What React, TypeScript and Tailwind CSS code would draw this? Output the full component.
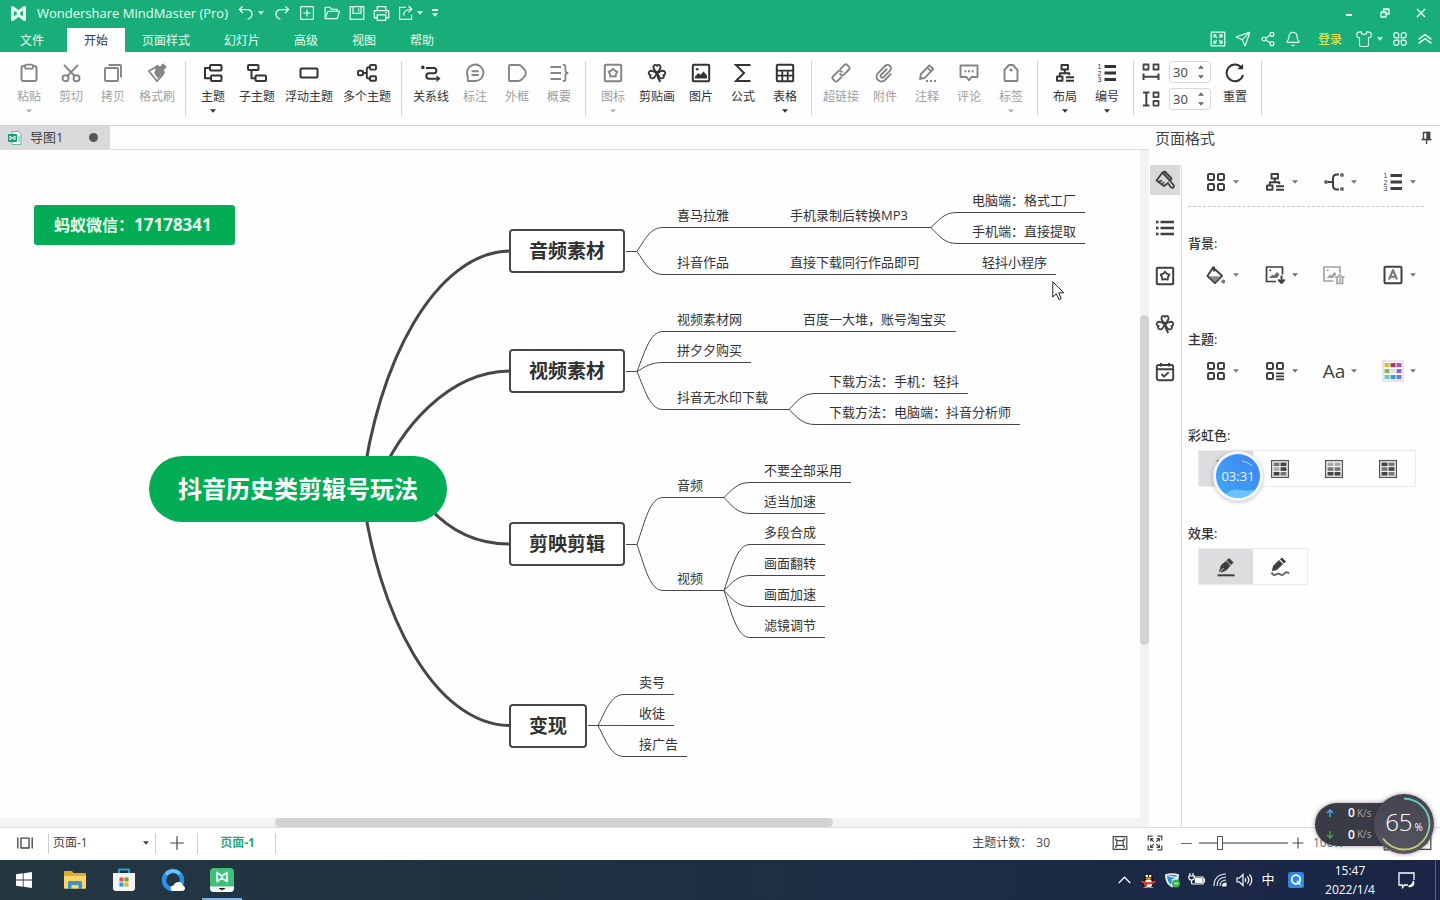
import type { ReactNode } from "react";
import { Bell, Send, Share2, Shirt } from "lucide-react";

/* ------------------------------------------------------------------ icons */

type IconProps = { children: ReactNode; size?: number; sw?: number };

function Icon({ children, size = 20, sw = 2 }: IconProps) {
  return (
    <svg
      width={size}
      height={size}
      viewBox="0 0 20 20"
      fill="none"
      stroke="currentColor"
      strokeWidth={sw}
      strokeLinejoin="round"
      aria-hidden="true"
      className="shrink-0"
    >
      {children}
    </svg>
  );
}

function Caret({ className = "" }: { className?: string }) {
  return (
    <svg width="6" height="4" viewBox="0 0 6 4" fill="currentColor" aria-hidden="true" className={`shrink-0 ${className}`}>
      <path d="M0 .3h6L3 3.7z" />
    </svg>
  );
}

const PasteIcon = () => (
  <Icon>
    <rect x="2.5" y="3" width="15" height="15" rx="2" />
    <rect x="6" y="1.6" width="8" height="4" rx="1.2" fill="#fff" strokeWidth="1.8" />
  </Icon>
);
const CutIcon = () => (
  <Icon sw={1.9}>
    <circle cx="4.5" cy="15.3" r="3" />
    <circle cx="15.5" cy="15.3" r="3" />
    <path d="M3 1.8 13.6 13M17 1.8 6.4 13" />
  </Icon>
);
const CopyIcon = () => (
  <Icon sw={1.9}>
    <rect x="2" y="5" width="13" height="13" rx="1" />
    <path d="M5.5 2H17a1 1 0 0 1 1 1v11.5" />
  </Icon>
);
const BrushIcon = () => (
  <Icon sw={1.8}>
    <path d="M1.8 8 9 4l7 7.5-6 6.7z" />
    <path d="m8.5 4.2 2.3-1.4 6.2 6.4-1.4 2.4z" fill="currentColor" />
    <path d="m12.8 5.4 3.2-3.9 2.6 2.3-3.6 4z" fill="currentColor" />
    <path d="m9 5.500-1.500 5 3.500 4.500 3.500-3.500z" fill="currentColor" strokeWidth=".5" />
  </Icon>
);
const TopicIcon = () => (
  <Icon>
    <rect x="7" y="2" width="11.5" height="5.5" rx="1" />
    <rect x="8" y="12.5" width="10.5" height="5.5" rx="1" />
    <path d="M7 5H2v10.3h6" />
  </Icon>
);
const SubtopicIcon = () => (
  <Icon>
    <rect x="1" y="2" width="10.5" height="5" rx="1" />
    <rect x="8.5" y="12.5" width="10.5" height="5.5" rx="1" />
    <path d="M4.5 7v8.3h4" />
  </Icon>
);
const FloatingIcon = () => (
  <Icon>
    <rect x="1.5" y="5.5" width="17" height="9" rx="1" />
  </Icon>
);
const MultiTopicIcon = () => (
  <Icon sw={1.9}>
    <rect x="1" y="7.8" width="5" height="4.4" rx="1" />
    <rect x="13" y="2" width="6" height="4.6" rx="1" />
    <rect x="13" y="13.2" width="6" height="4.6" rx="1" />
    <path d="M6 10h3.8M13 4.3h-1.2q-2 0-2 2v7.2q0 2 2 2H13" />
  </Icon>
);
const RelationIcon = () => (
  <Icon>
    <circle cx="1.8" cy="4.4" r="1.8" fill="currentColor" stroke="none" />
    <path d="M5 5h8.2a2.7 2.7 0 0 1 0 5.3H8a2.7 2.7 0 0 0 0 5.4h7.6" />
    <path d="m15.5 12.3 4 3.3-4 3.4z" fill="currentColor" stroke="none" />
  </Icon>
);
const CalloutIcon = () => (
  <Icon sw={1.9}>
    <path d="M2.8 18v-4.6A8.2 8.2 0 1 1 10.4 18z" />
    <path d="M6.6 8.3h7.2M6.6 12h7.2" />
  </Icon>
);
const BoundaryIcon = () => (
  <Icon sw={1.9}>
    <path d="M3 2h8.4q1.6 0 2.7.9L18 7.2q1.6 2.8 0 5.6l-3.9 4.3q-1.1.9-2.7.9H3q-1 0-1-1V3q0-1 1-1z" />
  </Icon>
);
const SummaryIcon = () => (
  <Icon sw={1.9}>
    <path d="M1.5 4H12M1.5 10H12M1.5 16H12" />
    <path d="M13.8 2h1q1.6 0 1.6 1.6v4q0 2.2 2.3 2.4-2.3.2-2.3 2.4v4q0 1.6-1.6 1.6h-1" strokeWidth="1.8" />
  </Icon>
);
const BadgeIcon = () => (
  <Icon sw={2}>
    <rect x="1.8" y="1.8" width="16.4" height="16.4" rx="1" />
    <path d="m10 5.6 1.7 2.1 2.7 1-1.4 2.3-.3 2.7-2.7-.6-2.7.6-.3-2.7-1.4-2.3 2.7-1z" strokeWidth="1.8" />
  </Icon>
);
const CloverIcon = () => (
  <Icon sw={1.8}>
    <path d="M10 9.6C7.5 7.5 5.8 5.5 6.6 3.3 7.3 1.4 9.3 1.3 10 2.9c.7-1.6 2.7-1.5 3.4.4.8 2.2-.9 4.2-3.4 6.3z" />
    <path d="M9.6 10.2c-.9 3-2.4 5.4-4.7 5.1-1.9-.3-2.4-2-1.2-3.2-1.9-.1-2.6-1.9-1.5-3.4 1.4-1.7 4.5-.7 7.4 1.5z" />
    <path d="M10.4 10.2c.9 3 2.4 5.4 4.7 5.1 1.9-.3 2.4-2 1.2-3.2 1.9-.1 2.6-1.9 1.5-3.4-1.4-1.7-4.5-.7-7.4 1.5z" />
    <path d="M10 10q.3 5 3.3 8.8" strokeWidth="2" />
  </Icon>
);
const PictureIcon = () => (
  <Icon sw={2}>
    <rect x="1.8" y="1.8" width="16.4" height="16.4" rx="1" />
    <path d="M4 15.500v-2l3.500-3.500 2 1.800 3-3.300 3.500 4v3z" fill="currentColor" stroke="none" />
    <circle cx="6.2" cy="6.2" r="1.3" fill="currentColor" stroke="none" />
  </Icon>
);
const SigmaIcon = () => (
  <Icon sw={2}>
    <path d="M17.5 2H3l8 8-8 8h14.5" strokeLinejoin="miter" />
  </Icon>
);
const TableIcon = () => (
  <Icon sw={2}>
    <rect x="1.8" y="1.8" width="16.4" height="16.4" rx="1" />
    <path d="M2 7.6h16M2 12.7h16M7.3 7.6V18M12.7 7.6V18" strokeWidth="1.8" />
  </Icon>
);
const LinkIcon = () => (
  <Icon sw={1.9}>
    <g transform="rotate(-45 10 10)">
      <path d="M8 13.2H1.8a1.800 1.800 0 0 1-1.800-1.800V8.600a1.800 1.800 0 0 1 1.800-1.800H9.500a1.800 1.800 0 0 1 1.800 1.800v2" />
      <path d="M12 6.800h6.200a1.800 1.800 0 0 1 1.800 1.800v2.800a1.800 1.800 0 0 1-1.800 1.800H10.500a1.800 1.800 0 0 1-1.800-1.800v-2" />
    </g>
  </Icon>
);
const ClipIcon = () => (
  <Icon sw={1.9}>
    <g transform="rotate(-45 10 10)">
      <path d="M14.500 8.500H6a1.700 1.700 0 0 0 0 3.400h9a3.400 3.400 0 0 0 0-6.800H5a4.900 4.900 0 0 0 0 9.800h9" />
    </g>
  </Icon>
);
const NoteIcon = () => (
  <Icon sw={1.9}>
    <path d="m3 16 1-5L12.3 2.3l4 3.7L8 14.7z" />
    <path d="m10.3 4.6 3.8 3.7" />
    <path d="M9 18h2M13 18h2M17 18h2" />
  </Icon>
);
const CommentIcon = () => (
  <Icon sw={1.9}>
    <path d="M1.5 2.5h17V14h-6L10 17.3 7.5 14h-6z" />
    <path d="M5.5 8.2h2M9 8.2h2M12.5 8.2h2" />
  </Icon>
);
const TagIcon = () => (
  <Icon sw={1.9}>
    <path d="M3.500 17.200V7L8 2h4l4.500 5v10.200q0 .8-.8.8H4.300q-.8 0-.8-.8z" />
    <circle cx="10" cy="7" r="1.6" fill="currentColor" stroke="none" />
  </Icon>
);
const LayoutIcon = () => (
  <Icon sw={1.9}>
    <rect x="6.5" y="2" width="6.5" height="4.5" />
    <rect x="2" y="13.5" width="5.5" height="4.3" />
    <path d="M9.8 6.500V10M4.800 13.500V10.200h9.500v2M11 14.300h8M11 17.800h8" />
  </Icon>
);
const NumberingIcon = () => (
  <Icon sw={2.8}>
    <path d="M7.5 3.500H19M7.500 10H19M7.500 16.500H19" />
    <g fill="currentColor" stroke="none" fontSize="7" fontFamily="Liberation Sans, sans-serif">
      <text x="0.5" y="6">1</text>
      <text x="0.5" y="12.5">2</text>
      <text x="0.5" y="19">3</text>
    </g>
  </Icon>
);
const HSpaceIcon = () => (
  <Icon sw={1.8}>
    <rect x="2.5" y="2.5" width="5" height="5" />
    <rect x="12.5" y="2.5" width="5" height="5" />
    <path d="M2.500 11.500v6.500M17.500 11.500v6.500M2.500 14.800h15" strokeWidth="2" />
  </Icon>
);
const VSpaceIcon = () => (
  <Icon sw={1.8}>
    <rect x="12.5" y="3.5" width="5" height="4.6" />
    <rect x="12.5" y="12" width="5" height="4.6" />
    <path d="M2 3.500h6.500M2 16.500h6.500M5.300 3.500v13" strokeWidth="2" />
  </Icon>
);
const ResetIcon = () => (
  <Icon sw={2}>
    <path d="M16.500 4.800A8.300 8.300 0 1 0 18 12" />
    <path d="M12.300 6.300h5.800V1z" fill="currentColor" stroke="none" />
  </Icon>
);

const squarePath = "M3 2h3.500q1.500 0 1.500 1.500V7q0 1-1 1H3.500Q2 8 2 6.500V3q0-1 1-1z";
const FourIcon = () => (
  <Icon sw={2}>
    <path d={squarePath} />
    <path d={squarePath} transform="translate(20 0) scale(-1 1)" />
    <path d={squarePath} transform="translate(0 20) scale(1 -1)" />
    <path d={squarePath} transform="translate(20 20) scale(-1 -1)" />
  </Icon>
);
const ThreeListIcon = () => (
  <Icon sw={2}>
    <path d={squarePath} />
    <path d={squarePath} transform="translate(20 0) scale(-1 1)" />
    <path d={squarePath} transform="translate(0 20) scale(1 -1)" />
    <path d="M11 12.300h8M11 15.300h8M11 18.300h8" strokeWidth="1.7" />
  </Icon>
);
const BranchIcon = () => (
  <Icon sw={2}>
    <path d="M3 10h6M15 2.500h-2q-4 0-4 4v7q0 4 4 4h2" />
    <g fill="#6b6b6b" stroke="none">
      <circle cx="2" cy="10" r="2" />
      <circle cx="18" cy="3" r="2" />
      <circle cx="18" cy="17" r="2" />
    </g>
  </Icon>
);
const PaintbrushIcon = () => (
  <Icon sw={1.9}>
    <path d="M1.500 10.500 7.500 2.500 9.800 1.500l6.700 7-2 3.500-5.500 4z" />
    <path d="m7.800 3 7.500 7.800" />
    <path d="m4 11.500 3-1M6.500 14l3-2" strokeWidth="1.4" />
    <path d="m13 13 3 4.300q1.300 1 2.300 0t0-2.500L15 11" fill="#fff" />
  </Icon>
);
const ListIcon = () => (
  <Icon sw={2.6}>
    <path d="M5.500 4H19M5.500 10H19M5.500 16H19M1 4h2.600M1 10h2.600M1 16h2.600" />
  </Icon>
);
const CalendarIcon = () => (
  <Icon sw={1.9}>
    <rect x="1.8" y="3" width="16.4" height="15.2" rx="2" />
    <path d="M2 7.200h16M6 1v3.500M14 1v3.500M6.500 12l2.600 2.600 4.600-4.400" />
  </Icon>
);
const BucketIcon = () => (
  <Icon sw={1.9}>
    <path d="m7 2.500 9 8.300-7 7.200-7.500-7z" />
    <path d="M3.500 11.300h11.300L9 17z" fill="#8a8a8a" stroke="none" />
    <path d="M8 1.500v5" />
    <circle cx="17.3" cy="16.5" r="1.9" fill="#777" stroke="none" />
  </Icon>
);
const PictureDownIcon = () => (
  <Icon sw={1.7}>
    <path d="M11 16.500H1.500V2h16v7.500" />
    <path d="m4 13 3.500-3.500 1.500 1L12 7l2.500 2.500-2.500 3.500z" fill="#6b6b6b" stroke="none" />
    <circle cx="5.2" cy="5.3" r="1" fill="currentColor" stroke="none" />
    <path d="M16.500 10.500v7M13.300 14.500l3.200 3.500 3.200-3.500" strokeWidth="2" />
  </Icon>
);
const PictureTrashIcon = () => (
  <svg width="22" height="20" viewBox="0 0 22 20" fill="none" stroke="currentColor" strokeWidth="1.7" aria-hidden="true" className="shrink-0">
    <path d="M10.500 16H1V2h16v6" />
    <path d="M3.500 13 7 9.500l1.500 1L11.500 7l2 2-3.500 4z" fill="currentColor" stroke="none" />
    <circle cx="4.8" cy="5.3" r="1" fill="currentColor" stroke="none" />
    <path d="M12 12h9.500M14 12v6.500h5.500V12M16.800 13.500v4M15 10h3.500" />
  </svg>
);
const WatermarkIcon = () => (
  <Icon sw={2}>
    <rect x="1.5" y="1.8" width="17" height="16.4" rx="1" />
    <path d="m6 14.500 4-9.500 4 9.500M7.300 11.700h5.400" stroke="#777" />
  </Icon>
);
const PaletteIcon = () => {
  const colors = ["#d0c13c", "#b4365c", "#a857a8", "#7fb84f", "#dedede", "#8a6cc4", "#6fc9ba", "#2f9fc6", "#7b78c4"];
  return (
    <svg width="22" height="22" viewBox="0 0 22 22" aria-hidden="true" className="shrink-0">
      <rect x="1" y="1" width="20" height="20" fill="#fff" stroke="#cfcde0" />
      {colors.map((c, i) => (
        <rect key={c} x={2.5 + (i % 3) * 6} y={3 + Math.floor(i / 3) * 6} width="5" height="4.2" fill={c} />
      ))}
    </svg>
  );
};
function RainbowIcon({ shades }: { shades: string[] }) {
  return (
    <svg width="20" height="20" viewBox="0 0 20 20" aria-hidden="true">
      <rect x="1.6" y="1.6" width="16.8" height="16.8" fill="#fff" stroke="#555" strokeWidth="1.3" />
      {shades.map((c, i) => (
        <rect key={i} x={3.5 + (i % 2) * 7} y={3.5 + Math.floor(i / 2) * 4.7} width="6" height="3.7" fill={c} />
      ))}
    </svg>
  );
}
const PenLineIcon = () => (
  <Icon sw={1}>
    <path d="m3.500 14.500 2-6.500 4.500-3.500 4 4-3.500 4.300-5 2.200z" fill="currentColor" />
    <path d="m11 3.500 2-2 4 4-2 2z" fill="currentColor" />
    <path d="m3.500 15.500 4-4.500" stroke="#dddcde" />
    <path d="M1.500 18.300h17" strokeWidth="2" />
  </Icon>
);
const PenWaveIcon = () => (
  <Icon sw={1}>
    <path d="M2.500 13.500 3.500 9l5.500-5.500L12.500 7 7 12.500z" fill="currentColor" />
    <path d="m10.500 2 1.500-1 3.500 3.500-1.500 1.500z" fill="currentColor" />
    <path d="M1.500 15.500q2 3.500 4.500 2t4.500 0 4-1 4.500 0" strokeWidth="2" stroke="#666" />
  </Icon>
);

/* ----------------------------------------------------------------- header */

const UndoIcon = () => (
  <Icon size={16} sw={1.6}>
    <path d="M6 1.500 1.800 5.700 6 10M2 5.700h9q6.500 0 6.500 6 0 5-5.500 6" />
  </Icon>
);
const RedoIcon = () => (
  <Icon size={16} sw={1.6}>
    <path d="m14 1.500 4.200 4.200L14 10M18 5.700H9q-6.500 0-6.500 6 0 5 5.500 6" />
  </Icon>
);
const NewIcon = () => (
  <Icon size={16} sw={1.5}>
    <rect x="2" y="2" width="16" height="16" rx="1" />
    <path d="M10 5.500v9M5.500 10h9" />
  </Icon>
);
const OpenIcon = () => (
  <Icon size={16} sw={1.5}>
    <path d="M1.500 17V3h6l2 2.500h7V8M1.500 17 5 8h14.500l-3 9z" />
  </Icon>
);
const SaveIcon = () => (
  <Icon size={16} sw={1.5}>
    <path d="M1.500 2h17v16h-17zM5 2v8.500h10V2M12 4.500V8" />
  </Icon>
);
const PrintIcon = () => (
  <Icon size={17} sw={1.5}>
    <path d="M5 6.500V2h10v4.500M5 15H1.500V6.500h17V15H15M5 11.500h10V18H5zM14.500 9h2" />
  </Icon>
);
const ExportIcon = () => (
  <Icon size={16} sw={1.5}>
    <path d="M10 3H2v15h15v-6M7 13q0-7 9-8M13 1.500 17.500 5 13 9" />
  </Icon>
);
const ExpandIcon = () => (
  <Icon size={16} sw={1.6}>
    <rect x="1.5" y="1.5" width="17" height="17" />
    <path d="M5 8V5h3M12 5h3v3M15 12v3h-3M8 15H5v-3M5 5l3.500 3.500M15 5l-3.500 3.500M15 15l-3.500-3.500M5 15l3.500-3.500" />
  </Icon>
);
const AppsIcon = () => (
  <Icon size={16} sw={1.5}>
    <path d="M8.500 8.500H5A3.200 3.200 0 1 1 8.500 5zM11.500 8.500V5A3.200 3.200 0 1 1 15 8.500zM8.500 11.500V15A3.200 3.200 0 1 1 5 11.500zM11.500 11.500H15a3.200 3.200 0 1 1-3.500 3.500z" />
  </Icon>
);

const titleBtn = "flex h-6 w-[25px] items-center justify-center";

const tabs = ["页面样式", "幻灯片", "高级", "视图", "帮助"];

function Header() {
  return (
    <header className="shrink-0 bg-[#19ae79] text-[#e3fff4]">
      <div className="flex h-7 items-center pb-0.5">
        <svg width="17" height="15" viewBox="0 0 17 15" aria-hidden="true" className="ml-[10px] mr-[10px] shrink-0">
          <path d="M2.500 13.500v-12l6 4.500 6-4.500v12l-6-4.500z" fill="none" stroke="currentColor" strokeWidth="3" strokeLinejoin="round" />
          <path d="M6.500 7.500 8.500 6l2 1.500-2 1.500z" fill="currentColor" />
        </svg>
        <h1 className="w-[197px] shrink-0 whitespace-nowrap text-[13px] leading-6">Wondershare MindMaster (Pro)</h1>
        <button aria-label="撤销" className="flex h-6 w-[35px] items-center gap-1 pl-1"><UndoIcon /><Caret /></button>
        <button aria-label="重做" className={titleBtn}><RedoIcon /></button>
        <button aria-label="新建" className={titleBtn}><NewIcon /></button>
        <button aria-label="打开" className={titleBtn}><OpenIcon /></button>
        <button aria-label="保存" className={titleBtn}><SaveIcon /></button>
        <button aria-label="打印" className={titleBtn}><PrintIcon /></button>
        <button aria-label="导出" className="flex h-6 w-[35px] items-center gap-[3px] pl-1"><ExportIcon /><Caret /></button>
        <button aria-label="更多" className="flex h-6 w-3 flex-col items-center justify-center gap-0.5">
          <span className="h-0.5 w-[6px] bg-current" /><Caret />
        </button>
        <div className="ml-auto flex pr-px">
          <button aria-label="最小化" className="flex h-6 w-9 items-center justify-center">
            <span className="mt-1 h-0.5 w-1.5 bg-white" />
          </button>
          <button aria-label="还原" className="flex h-6 w-9 items-center justify-center">
            <Icon size={10} sw={2.6}><path d="M2 8h10v10H2zM7 8V2h11v10h-6" /><path d="M2 9h10M7 3h11" /></Icon>
          </button>
          <button aria-label="关闭" className="flex h-6 w-9 items-center justify-center">
            <Icon size={10} sw={3}><path d="m2 2 16 16M18 2 2 18" /></Icon>
          </button>
        </div>
      </div>
      <nav className="flex h-6 text-xs leading-[22px]">
        <button className="mr-[3px] px-5 pt-0.5">文件</button>
        <button className="bg-white px-[17px] pt-0.5 text-[#333]">开始</button>
        {tabs.map((t) => (
          <button key={t} className="px-[17px] pt-0.5">{t}</button>
        ))}
        <div className="ml-auto flex items-center pb-0.5 pr-[3px]">
          <button aria-label="全屏" className={titleBtn}><ExpandIcon /></button>
          <button aria-label="发送" className={titleBtn}><Send size={16} strokeWidth={1.7} /></button>
          <button aria-label="分享" className={titleBtn}><Share2 size={16} strokeWidth={1.7} /></button>
          <button aria-label="通知" className={titleBtn}><Bell size={16} strokeWidth={1.7} /></button>
          <button className="w-[50px] pt-0.5 font-medium text-[#dfe05a]">登录</button>
          <button aria-label="皮肤" className="flex w-8 items-center gap-1"><Shirt size={18} strokeWidth={1.5} /><Caret /></button>
          <button aria-label="应用" className={titleBtn}><AppsIcon /></button>
          <button aria-label="收起" className={titleBtn}>
            <Icon size={16} sw={1.8}><path d="m2 10.500 8-6 8 6M2 15.500l8-6 8 6" /></Icon>
          </button>
        </div>
      </nav>
    </header>
  );
}

/* ----------------------------------------------------------------- ribbon */

type Tool = { label: string; icon: ReactNode; off?: boolean; menu?: boolean };

const groups: Tool[][] = [
  [
    { label: "粘贴", icon: <PasteIcon />, off: true, menu: true },
    { label: "剪切", icon: <CutIcon />, off: true },
    { label: "拷贝", icon: <CopyIcon />, off: true },
    { label: "格式刷", icon: <BrushIcon />, off: true },
  ],
  [
    { label: "主题", icon: <TopicIcon />, menu: true },
    { label: "子主题", icon: <SubtopicIcon /> },
    { label: "浮动主题", icon: <FloatingIcon /> },
    { label: "多个主题", icon: <MultiTopicIcon /> },
  ],
  [
    { label: "关系线", icon: <RelationIcon /> },
    { label: "标注", icon: <CalloutIcon />, off: true },
    { label: "外框", icon: <BoundaryIcon />, off: true },
    { label: "概要", icon: <SummaryIcon />, off: true },
  ],
  [
    { label: "图标", icon: <BadgeIcon />, off: true, menu: true },
    { label: "剪贴画", icon: <CloverIcon /> },
    { label: "图片", icon: <PictureIcon /> },
    { label: "公式", icon: <SigmaIcon /> },
    { label: "表格", icon: <TableIcon />, menu: true },
  ],
  [
    { label: "超链接", icon: <LinkIcon />, off: true },
    { label: "附件", icon: <ClipIcon />, off: true },
    { label: "注释", icon: <NoteIcon />, off: true },
    { label: "评论", icon: <CommentIcon />, off: true },
    { label: "标签", icon: <TagIcon />, off: true, menu: true },
  ],
  [
    { label: "布局", icon: <LayoutIcon />, menu: true },
    { label: "编号", icon: <NumberingIcon />, menu: true },
  ],
];

const toolWidths: Record<number, string> = { 2: "w-[42px]", 3: "w-[46px]", 4: "w-[58px]" };

function ToolButton({ label, icon, off, menu }: Tool) {
  return (
    <button
      disabled={off}
      className={`flex flex-col items-center pt-[11px] ${toolWidths[label.length]} ${off ? "text-[#858585]" : "text-[#333]"}`}
    >
      {icon}
      <span className={`mt-[5px] whitespace-nowrap text-xs leading-[18px] ${off ? "text-[#a0a0a0]" : ""}`}>{label}</span>
      {menu && <Caret className={off ? "mt-[3px] text-[#b4b4b4]" : "mt-[3px]"} />}
    </button>
  );
}

const Divider = () => <span className="ml-[5px] mr-1.5 mt-[9px] h-[55px] w-px shrink-0 bg-[#d6d6d6]" />;

function SpacingField({ id, label, icon }: { id: string; label: string; icon: ReactNode }) {
  return (
    <div className="flex items-center gap-2">
      <label htmlFor={id} aria-label={label}>{icon}</label>
      <div className="flex h-[22px] w-[42px] rounded-[3px] border border-[#d9d9dc]">
        <input id={id} defaultValue="30" className="w-7 bg-transparent pl-[3px] text-[13px] leading-5 text-[#444] outline-none" />
        <div className="flex flex-col justify-between py-[3px] text-[#6b6b6b]">
          <button aria-label={`增加${label}`}><Caret className="block rotate-180" /></button>
          <button aria-label={`减少${label}`}><Caret className="block" /></button>
        </div>
      </div>
    </div>
  );
}

function Ribbon() {
  return (
    <div className="flex h-[74px] shrink-0 border-b border-[#cfcfd1] pl-2">
      {groups.map((g) => (
        <div key={g[0].label} className="flex">
          {g.map((t) => <ToolButton key={t.label} {...t} />)}
          <Divider />
        </div>
      ))}
      <div className="ml-px mr-[3px] flex flex-col gap-[5px] pt-[9px] text-[#444]">
        <SpacingField id="gap-x" label="水平间距" icon={<HSpaceIcon />} />
        <SpacingField id="gap-y" label="垂直间距" icon={<VSpaceIcon />} />
      </div>
      <ToolButton label="重置" icon={<ResetIcon />} />
      <Divider />
    </div>
  );
}

/* --------------------------------------------------------------- mind map */

type Leaf = { text: string; x: number; y: number };

/* y is the height of the line on which the topic stands */
const leaves: Leaf[] = [
  { text: "喜马拉雅", x: 677, y: 77 },
  { text: "手机录制后转换MP3", x: 790, y: 77 },
  { text: "电脑端：格式工厂", x: 972, y: 62 },
  { text: "手机端：直接提取", x: 972, y: 93 },
  { text: "抖音作品", x: 677, y: 124 },
  { text: "直接下载同行作品即可", x: 790, y: 124 },
  { text: "轻抖小程序", x: 982, y: 124 },
  { text: "视频素材网", x: 677, y: 181 },
  { text: "百度一大堆，账号淘宝买", x: 803, y: 181 },
  { text: "拼夕夕购买", x: 677, y: 212 },
  { text: "抖音无水印下载", x: 677, y: 259 },
  { text: "下载方法：手机：轻抖", x: 829, y: 243 },
  { text: "下载方法：电脑端：抖音分析师", x: 829, y: 274 },
  { text: "音频", x: 677, y: 347 },
  { text: "不要全部采用", x: 764, y: 332 },
  { text: "适当加速", x: 764, y: 363 },
  { text: "视频", x: 677, y: 440 },
  { text: "多段合成", x: 764, y: 394 },
  { text: "画面翻转", x: 764, y: 425 },
  { text: "画面加速", x: 764, y: 456 },
  { text: "滤镜调节", x: 764, y: 487 },
  { text: "卖号", x: 639, y: 544 },
  { text: "收徒", x: 639, y: 575 },
  { text: "接广告", x: 639, y: 606 },
];

const mainTopics: Leaf[] = [
  { text: "音频素材", x: 509, y: 79 },
  { text: "视频素材", x: 509, y: 199 },
  { text: "剪映剪辑", x: 509, y: 372 },
  { text: "变现", x: 509, y: 554 },
];

/* [start x, start y, end y, end of the line] */
const branches: [number, number, number, number][] = [
  [637, 101, 77, 931],
  [637, 101, 124, 1056],
  [931, 77, 62, 1085],
  [931, 77, 93, 1085],
  [637, 221, 181, 956],
  [637, 221, 212, 751],
  [637, 221, 259, 789],
  [789, 259, 243, 968],
  [789, 259, 274, 1020],
  [637, 394, 347, 724],
  [637, 394, 440, 724],
  [724, 347, 332, 851],
  [724, 347, 363, 825],
  [724, 440, 394, 825],
  [724, 440, 425, 825],
  [724, 440, 456, 825],
  [724, 440, 487, 825],
  [598, 575, 544, 674],
  [598, 575, 575, 674],
  [598, 575, 606, 687],
];

function branchPath([x, y, y2, end]: [number, number, number, number]) {
  const dy = y2 - y;
  return `M${x} ${y + 0.5}C${x + 8} ${y + 0.5 + dy * 0.5} ${x + 13} ${y2 + 0.5} ${x + 26} ${y2 + 0.5}H${end}`;
}

function MindMap() {
  return (
    <main className="relative min-h-0 min-w-0 flex-1 overflow-hidden bg-[#fefefe]">
      <svg width="1140" height="668" className="absolute left-0 top-0" fill="none" aria-hidden="true">
        <g stroke="#474747" strokeWidth="3">
          <path d="M362 339C377 213 435 103 509 101" />
          <path d="M375 339C400 275 450 222 509 221" />
          <path d="M425 353C445 377 472 394 509 394" />
          <path d="M362 339C377 465 435 574 509 575.5" />
        </g>
        <g stroke="#474747" strokeWidth="1">
          <path d="M626 101.500h11M626 221.500h11M626 394.500h11M588 575.500h10" />
          {branches.map((b) => (
            <path key={b.join()} d={branchPath(b)} />
          ))}
        </g>
      </svg>
      <div className="absolute left-[34px] top-[55px] min-w-[201px] rounded-[3px] bg-[#03ad55] px-5 text-base font-bold leading-10 text-[#eafff3]">
        蚂蚁微信：<span className="text-[17px]">17178341</span>
      </div>
      <div className="absolute left-[149px] top-[306px] rounded-full bg-[#03ad55] px-[29px] text-2xl font-bold leading-[66px] text-white">
        抖音历史类剪辑号玩法
      </div>
      {mainTopics.map((t) => (
        <div
          key={t.text}
          className="absolute whitespace-nowrap rounded-[4px] border-2 border-[#474747] bg-white px-[18px] text-[19px] font-bold leading-10 text-[#303030]"
          style={{ left: t.x, top: t.y }}
        >
          {t.text}
        </div>
      ))}
      {leaves.map((t) => (
        <div
          key={t.text + t.y}
          className="absolute whitespace-nowrap text-[13px] leading-5 text-[#333]"
          style={{ left: t.x, top: t.y - 22 }}
        >
          {t.text}
        </div>
      ))}
      <svg width="13" height="20" viewBox="0 0 13 20" aria-hidden="true" className="absolute left-[1052px] top-[131px]">
        <path d="M.8.8V16l3.600-3.300 2.500 5.800 2.300-1-2.500-5.700h5z" fill="#fff" stroke="#222" />
      </svg>
    </main>
  );
}

function DocumentArea() {
  return (
    <section className="flex min-w-0 flex-1 flex-col">
      <div className="flex h-6 shrink-0 border-b border-[#dedee0]">
        <button className="flex w-[110px] items-center bg-[#d9d8da] pl-2 text-[13px] text-[#444]">
          <svg width="14" height="14" viewBox="0 0 14 14" aria-hidden="true">
            <path d="M4 .5h6.500L13 3v10.500H4z" fill="#f2fbf8" stroke="#6bb5a2" />
            <rect y="3" width="9" height="8" rx="1" fill="#159b78" />
            <path d="M2 9V5l2.500 2L7 5v4L4.500 7z" fill="none" stroke="#fff" />
            <path d="M10 6h2M10 8h2M10 10h2" stroke="#6bb5a2" />
          </svg>
          <span className="ml-2">导图1</span>
          <span className="ml-auto mr-3 h-[9px] w-[9px] rounded-full bg-[#575757]" />
        </button>
      </div>
      <div className="flex min-h-0 flex-1">
        <MindMap />
        <div className="w-[9px] shrink-0 bg-[#f3f3f5] pt-[165px]">
          <div className="h-[330px] rounded-full bg-[#d2d1d4]" />
        </div>
      </div>
      <div className="h-[9px] shrink-0 bg-[#f3f3f5] pl-[275px]">
        <div className="h-full w-[558px] rounded-full bg-[#d2d1d4]" />
      </div>
    </section>
  );
}

/* ------------------------------------------------------------- side panel */

const sideTabs = [
  { label: "页面格式", icon: <PaintbrushIcon /> },
  { label: "大纲", icon: <ListIcon /> },
  { label: "图标", icon: <BadgeIcon /> },
  { label: "剪贴画", icon: <CloverIcon /> },
  { label: "任务", icon: <CalendarIcon /> },
];

function PanelButton({ label, children, menu = true, off }: { label: string; children: ReactNode; menu?: boolean; off?: boolean }) {
  return (
    <button aria-label={label} disabled={off} className={`flex h-6 w-[59px] shrink-0 items-center ${off ? "text-[#a3a3a3]" : "text-[#3f3f3f]"}`}>
      <span className="flex w-[22px] justify-center">{children}</span>
      {menu && <Caret className="ml-1.5 text-[#777]" />}
    </button>
  );
}

const SectionLabel = ({ children }: { children: ReactNode }) => (
  <h2 className="text-[13px] font-medium leading-5 text-[#333]">{children}</h2>
);

const D = "#444";
const M = "#777";
const L = "#aaa";

function SidePanel() {
  return (
    <aside className="flex w-[291px] shrink-0 flex-col bg-[#fefefe]">
      <div className="flex h-[25px] items-center pb-0.5 pl-1.5 pr-2 text-[#444]">
        <h2 className="text-[15px] leading-[22px]">页面格式</h2>
        <button aria-label="固定" className="ml-auto">
          <svg width="11" height="14" viewBox="0 0 11 14" fill="none" stroke="currentColor" strokeWidth="1.4" aria-hidden="true">
            <path d="M2.500 8.500v-7h6v7M.5 8.500h10M5.500 8.500V13" />
            <path d="M6 1.500h2.500v7H6z" fill="currentColor" />
          </svg>
        </button>
      </div>
      <div className="flex flex-1 pl-px pt-[14px]">
        <nav className="flex w-[32px] shrink-0 flex-col gap-[18px] border-r border-[#dcdcde] text-[#3f3f3f]">
          {sideTabs.map((t, i) => (
            <button
              key={t.label}
              aria-label={t.label}
              className={`flex h-[30px] w-[30px] items-center justify-center ${i === 0 ? "bg-[#d9d8da]" : ""}`}
            >
              {t.icon}
            </button>
          ))}
        </nav>
        <div className="min-w-0 flex-1 pl-1.5 pr-4 pt-[5px]">
          <div className="flex pl-[17px]">
            <PanelButton label="布局样式"><FourIcon /></PanelButton>
            <PanelButton label="布局"><LayoutIcon /></PanelButton>
            <PanelButton label="连接线"><BranchIcon /></PanelButton>
            <PanelButton label="编号"><NumberingIcon /></PanelButton>
          </div>
          <div className="mt-3 border-t border-dashed border-[#c9c9c9]" />
          <div className="mt-[26px]"><SectionLabel>背景:</SectionLabel></div>
          <div className="mt-[10px] flex pl-[17px]">
            <PanelButton label="填充"><BucketIcon /></PanelButton>
            <PanelButton label="背景图片"><PictureDownIcon /></PanelButton>
            <PanelButton label="删除背景图片" menu={false} off><PictureTrashIcon /></PanelButton>
            <PanelButton label="水印"><WatermarkIcon /></PanelButton>
          </div>
          <div className="mt-[42px]"><SectionLabel>主题:</SectionLabel></div>
          <div className="mt-[10px] flex pl-[17px]">
            <PanelButton label="主题样式"><FourIcon /></PanelButton>
            <PanelButton label="主题列表"><ThreeListIcon /></PanelButton>
            <PanelButton label="主题字体"><span className="text-[19px] leading-6">Aa</span></PanelButton>
            <PanelButton label="主题颜色"><PaletteIcon /></PanelButton>
          </div>
          <div className="mt-[42px]"><SectionLabel>彩虹色:</SectionLabel></div>
          <div className="ml-2.5 mt-[5px] flex h-[37px] w-[218px] border border-[#ebebed]">
            <button aria-label="单色" className="flex w-[54px] items-center justify-center bg-[#dddcde]">
              <RainbowIcon shades={[D, D, D, D, D, D]} />
            </button>
            <button aria-label="彩虹色一" className="flex w-[54px] items-center justify-center"><RainbowIcon shades={[M, D, L, D, D, M]} /></button>
            <button aria-label="彩虹色二" className="flex w-[54px] items-center justify-center"><RainbowIcon shades={[L, L, M, M, D, D]} /></button>
            <button aria-label="彩虹色三" className="flex w-[54px] items-center justify-center"><RainbowIcon shades={[D, M, M, D, D, M]} /></button>
          </div>
          <div className="mt-[36px]"><SectionLabel>效果:</SectionLabel></div>
          <div className="ml-2.5 mt-[5px] flex h-[37px] w-[110px] border border-[#ebebed] text-[#3f3f3f]">
            <button aria-label="普通" className="flex w-[54px] items-center justify-center bg-[#dddcde]"><PenLineIcon /></button>
            <button aria-label="手绘" className="flex w-[54px] items-center justify-center"><PenWaveIcon /></button>
          </div>
        </div>
      </div>
    </aside>
  );
}

/* ------------------------------------------------------------- status bar */

const Bar = () => <span className="h-[21px] w-px shrink-0 bg-[#cfcfcf]" />;

function StatusBar() {
  return (
    <footer className="flex h-[33px] shrink-0 items-center border-t border-[#dcdcde] bg-white pb-0.5 text-xs text-[#444]">
      <button aria-label="页面列表" className="flex w-12 items-center justify-center pl-0.5">
        <Icon size={18} sw={1.5}><path d="M2 4v12M18 4v12M5.500 4.500h9v11h-9z" /></Icon>
      </button>
      <Bar />
      <div className="relative w-[106px]">
        <select aria-label="页面" className="w-full appearance-none bg-transparent pl-1 text-xs leading-5 outline-none">
          <option>页面-1</option>
        </select>
        <Caret className="pointer-events-none absolute right-[6px] top-2" />
      </div>
      <Bar />
      <button aria-label="添加页面" className="flex w-[41px] justify-center">
        <Icon size={16} sw={1.5}><path d="M10 1.500v17M1.500 10h17" /></Icon>
      </button>
      <Bar />
      <button className="w-[77px] pl-0.5 font-bold text-[#2aa37a]">页面-1</button>
      <Bar />
      <div className="ml-auto mr-[52px] whitespace-nowrap">主题计数：<span className="ml-1">30</span></div>
      <button aria-label="适合页面" className="flex w-[35px] justify-center">
        <Icon size={16} sw={1.5}><path d="M1.500 2h17v16h-17zM6 7h8v6H6zM4.500 7V5h2M13.500 5h2v2M15.500 13v2h-2M6.500 15h-2v-2" /></Icon>
      </button>
      <button aria-label="全屏显示" className="flex w-[35px] justify-center">
        <Icon size={16} sw={1.5}><path d="M7 1.500H1.500V7M13 1.500h5.500V7M18.500 13v5.500H13M7 18.500H1.500V13M4.500 8V4.500H8M12 4.500h3.500V8M15.500 12v3.500H12M8 15.500H4.500V12M4.500 4.500l4 4M15.500 4.500l-4 4M15.500 15.500l-4-4M4.500 15.500l4-4" /></Icon>
      </button>
      <button aria-label="缩小" className="flex w-5 items-center justify-end"><span className="h-px w-[11px] bg-[#666]" /></button>
      <input
        type="range"
        aria-label="缩放"
        defaultValue={22}
        className="ml-[7px] mr-[3px] h-4 w-[89px] appearance-none bg-transparent [&::-webkit-slider-runnable-track]:h-0.5 [&::-webkit-slider-runnable-track]:bg-[#999] [&::-webkit-slider-thumb]:-mt-[6px] [&::-webkit-slider-thumb]:h-[14px] [&::-webkit-slider-thumb]:w-[6px] [&::-webkit-slider-thumb]:appearance-none [&::-webkit-slider-thumb]:border [&::-webkit-slider-thumb]:border-[#555] [&::-webkit-slider-thumb]:bg-white"
      />
      <button aria-label="放大" className="flex w-[14px] items-center justify-center">
        <Icon size={12} sw={1.8}><path d="M10 1v18M1 10h18" /></Icon>
      </button>
      <span className="ml-2 w-[60px] text-[#777]">100%</span>
      <button aria-label="定位" className="flex w-[35px] justify-center">
        <Icon size={16} sw={1.5}><path d="M7 1.500H1.500V7M13 1.500h5.500V7M18.500 13v5.500H13M7 18.500H1.500V13" /></Icon>
      </button>
      <button aria-label="面板" className="flex w-[32px] justify-center">
        <Icon size={16} sw={1.5}><path d="M1.500 2h17v16h-17zM5 10h10" /></Icon>
      </button>
    </footer>
  );
}

/* ---------------------------------------------------------------- taskbar */

const taskBtn = "flex h-full w-[49px] items-center justify-center";
const trayBtn = "flex h-full w-6 items-center justify-center";

function Taskbar() {
  return (
    <div className="flex h-10 shrink-0 items-center bg-linear-to-r from-[#243740] via-[#1e2e42] to-[#1a2547] text-white">
      <button aria-label="开始" className="mr-0.5 flex h-full w-12 items-center justify-center">
        <svg width="16" height="16" viewBox="0 0 16 16" fill="#fff" aria-hidden="true">
          <path d="M0 2.300 6.800 1.300v6.300H0zM7.600 1.200 16 0v7.600H7.600zM0 8.400h6.800v6.300L0 13.700zM7.600 8.400H16V16l-8.400-1.200z" />
        </svg>
      </button>
      <button aria-label="文件资源管理器" className={taskBtn}>
        <svg width="22" height="18" viewBox="0 0 22 18" aria-hidden="true">
          <path d="M0 1q0-1 1-1h7l1.500 2H21q1 0 1 1v14H0z" fill="#e3a92f" />
          <path d="M0 5h22v12q0 .8-.8.800H.8Q0 17.800 0 17z" fill="#fbd66b" />
          <path d="M4 18v-6.500Q4 10 5.500 10h11q1.500 0 1.500 1.500V18h-3.500v-4h-7v4z" fill="#4293bd" />
        </svg>
      </button>
      <button aria-label="应用商店" className={taskBtn}>
        <svg width="24" height="24" viewBox="0 0 24 24" aria-hidden="true">
          <path d="M7 6V1.500h10V6" fill="none" stroke="#2c9fc9" strokeWidth="2" />
          <path d="M1 5h22v15q0 3-3 3H4q-3 0-3-3z" fill="#f4f4f5" />
          <path d="M7.500 9.500h4v4h-4z" fill="#e0533b" />
          <path d="M12.500 9.500h4v4h-4z" fill="#6fa62c" />
          <path d="M7.500 14.500h4v4h-4z" fill="#2b9bdc" />
          <path d="M12.500 14.500h4v4h-4z" fill="#eab029" />
        </svg>
      </button>
      <button aria-label="浏览器" className={taskBtn}>
        <svg width="24" height="24" viewBox="0 0 24 24" aria-hidden="true">
          <circle cx="12" cy="12" r="9" fill="none" stroke="#2b8ff0" strokeWidth="4.5" />
          <path d="M5 6.500Q12-.5 19 6" fill="none" stroke="#6cc4fb" strokeWidth="3" />
          <path d="M12 23q-2.500-.3-2.500-2.700T12.500 17.500q1.500-3.500 5-3.500 4 .3 4.500 3.500 2 .7 2 2.800Q23.700 23 21 23z" fill="#fff" />
        </svg>
      </button>
      <button aria-label="MindMaster" className={`${taskBtn} relative`}>
        <svg width="24" height="24" viewBox="0 0 24 24" aria-hidden="true">
          <rect width="24" height="24" rx="4" fill="#3fbf78" />
          <path d="M0 18.500h24V20q0 4-4 4H4q-4 0-4-4z" fill="#fff" />
          <path d="M7 13.500v-9l5 3.500 5-3.500v9L12 10z" fill="none" stroke="#e6fff2" strokeWidth="1.8" strokeLinejoin="round" />
          <path d="M9 20h6q0 2-1.500 1.300L12 22.500l-1.500-1.200Q9 22 9 20z" fill="#222" />
        </svg>
        <span className="absolute bottom-0 left-[5px] h-0.5 w-10 bg-[#78b4e6]" />
      </button>

      <div className="ml-auto flex h-full items-center">
        <button aria-label="显示隐藏的图标" className={trayBtn}><Icon size={13} sw={2}><path d="m1 14 9-9 9 9" /></Icon></button>
        <button aria-label="QQ" className={trayBtn}>
          <svg width="15" height="17" viewBox="0 0 15 17" aria-hidden="true">
            <ellipse cx="7.5" cy="10.5" rx="6" ry="5.5" fill="#161616" />
            <circle cx="7.5" cy="5" r="4.5" fill="#161616" />
            <ellipse cx="7.5" cy="11.5" rx="3.8" ry="4" fill="#fff" />
            <path d="M1 8.500q6.500 3.500 13 0l.5 2q-7 4-14 0zM3 10l3 .5v4H3.500z" fill="#e03a2f" />
            <circle cx="5.8" cy="4" r="1.3" fill="#fff" /><circle cx="9.2" cy="4" r="1.3" fill="#fff" />
            <ellipse cx="7.5" cy="6.5" rx="3" ry="1" fill="#f2a01d" />
            <path d="M2 16q2.500-2 5 0zM8 16q2.500-2 5 0z" fill="#f2a01d" />
          </svg>
        </button>
        <button aria-label="电脑管家" className={trayBtn}>
          <svg width="17" height="16" viewBox="0 0 17 16" aria-hidden="true">
            <path d="M1 2.500Q8 0 15 2.500 15 12 8 15.500 1 12 1 2.500z" fill="#e8f5fd" />
            <path d="M3 3.500q5-1.500 10 0-.5 3-5 3.500 0 3-1 6Q3 9.500 3 3.500z" fill="#2d8fd8" />
            <path d="M4.500 4 12 5.500" stroke="#fff" />
            <circle cx="12" cy="11.5" r="4" fill="#36b34a" /><path d="M10 11.500h4" stroke="#fff" strokeWidth="1.3" />
          </svg>
        </button>
        <button aria-label="电源" className={trayBtn}>
          <svg width="17" height="14" viewBox="0 0 17 14" fill="none" stroke="#fff" strokeWidth="1.2" aria-hidden="true">
            <path d="M6.500 4H15v7H5M15 6h1.500v3H15M2 0v3M5 0v3M.8 3h5.400v2Q6 7 3.500 7T.8 5zM3.500 7v3q0 1 1.500 1" />
            <path d="M7.500 5.500h6v4h-6z" fill="#fff" />
          </svg>
        </button>
        <button aria-label="网络" className={trayBtn}>
          <svg width="14" height="14" viewBox="0 0 14 14" fill="none" stroke="#dfe3ea" strokeWidth="1.2" aria-hidden="true">
            <path d="M1 13Q1 1.500 13 1M4 13q0-8.500 9-9M7 13q0-5.500 6-6" />
            <path d="M9.500 13q0-3 3.500-3v3z" fill="#fff" />
          </svg>
        </button>
        <button aria-label="音量" className={trayBtn}>
          <svg width="17" height="14" viewBox="0 0 17 14" fill="none" stroke="#fff" strokeWidth="1.2" aria-hidden="true">
            <path d="M1 5h2.500L7 1.500v11L3.500 9H1zM9 5q1.500 2 0 4M11.300 3.300q3 3.700 0 7.400M13.500 1.500q4.500 5.500 0 11" />
          </svg>
        </button>
        <button className={`${trayBtn} text-[13px]`}>中</button>
        <button aria-label="输入法" className="flex h-full w-8 items-center justify-center">
          <svg width="16" height="16" viewBox="0 0 16 16" fill="none" aria-hidden="true">
            <rect width="16" height="16" rx="2.5" fill="#2f86e6" />
            <circle cx="8" cy="7.5" r="4.3" stroke="#fff" strokeWidth="1.8" />
            <path d="m9 9 3 3.500" stroke="#fff" strokeWidth="1.8" />
            <circle cx="13" cy="13.5" r="1" fill="#6be06b" />
          </svg>
        </button>
        <time className="w-[76px] text-center text-xs leading-[19px]">15:47<br />2022/1/4</time>
        <button aria-label="通知中心" className="flex h-full w-[38px] items-center justify-center">
          <svg width="18" height="17" viewBox="0 0 18 17" fill="none" stroke="#fff" strokeWidth="1.3" aria-hidden="true">
            <path d="M10 13H6.500L4.500 15.500V13H1V1h15v7" />
            <path d="M15.500 9q1.500 6-5 5.500 4-1 5-5.500z" fill="#fff" />
          </svg>
        </button>
        <span className="ml-[9px] h-full w-[5px] border-l border-[#5c667a]" />
      </div>
    </div>
  );
}

/* ---------------------------------------------------------------- widgets */

function RecorderBall() {
  return (
    <div className="absolute right-[177px] top-[451px] h-[50px] w-[50px] rounded-full bg-[#f2f8ff] p-[3px] shadow-[0_1px_4px_rgba(0,0,0,0.25)]">
      <div className="relative flex h-full items-center justify-center overflow-hidden rounded-full bg-linear-to-tr from-[#3fa9f5] to-[#3f83f0]">
        <svg viewBox="0 0 44 44" className="absolute inset-0" fill="none" aria-hidden="true">
          <path d="M8 41q9-7 16-5t18-1v10H8z" fill="#6cc3fb" />
          <path d="M26 7q6 1 10 5" stroke="#9cc8ff" strokeWidth="1.2" />
        </svg>
        <span className="relative text-[13px] leading-5 text-[#e8f4ff]">03:31</span>
      </div>
    </div>
  );
}

function SpeedWidget() {
  return (
    <div className="absolute bottom-[46px] right-1.5 flex h-[60px] w-[119px] items-center">
      <div className="flex h-[43px] w-[90px] flex-col rounded-l-full bg-[#2e313a]/95 pl-[11px] text-xs shadow-[0_0_4px_rgba(60,30,60,0.5)]">
        {[
          { color: "text-[#4aa8e8]", d: "M4 8V1M1 4l3-3 3 3" },
          { color: "text-[#37a34a]", d: "M4 0v7M1 4l3 3 3-3" },
        ].map((r) => (
          <div key={r.d} className="flex h-[22px] items-center">
            <svg width="8" height="8" viewBox="0 0 8 8" fill="none" stroke="currentColor" strokeWidth="1.5" aria-hidden="true" className={r.color}>
              <path d={r.d} />
            </svg>
            <span className="ml-[14px] font-semibold text-white">0</span>
            <span className="ml-0.5 text-[10px] text-[#a9abb2]">K/s</span>
          </div>
        ))}
      </div>
      <div className="absolute right-0 top-0 flex h-[60px] w-[60px] items-center justify-center rounded-full bg-linear-to-b from-[#42434f] to-[#565762] shadow-[0_0_4px_rgba(60,30,60,0.5)]">
        <svg viewBox="0 0 60 60" className="absolute inset-0" fill="none" aria-hidden="true">
          <defs>
            <linearGradient id="ring" x1="0" y1="0" x2="0" y2="1">
              <stop offset="0" stopColor="#5cc9c4" />
              <stop offset=".6" stopColor="#8fd09a" />
              <stop offset="1" stopColor="#cfc56a" />
            </linearGradient>
          </defs>
          <path d="M30 4.500A25.500 25.500 0 1 1 9 44.500" stroke="url(#ring)" strokeWidth="1.8" />
        </svg>
        <span className="relative flex items-baseline text-2xl font-light leading-8 text-white">
          65<span className="ml-0.5 text-[10px] font-normal">%</span>
        </span>
      </div>
    </div>
  );
}

export default function App() {
  return (
    <div className="relative flex h-screen flex-col overflow-hidden bg-[#fefefe] font-['Open_Sans','Noto_Sans_CJK_SC',sans-serif]">
      <Header />
      <Ribbon />
      <div className="flex min-h-0 flex-1">
        <DocumentArea />
        <SidePanel />
      </div>
      <StatusBar />
      <Taskbar />
      <RecorderBall />
      <SpeedWidget />
    </div>
  );
}
